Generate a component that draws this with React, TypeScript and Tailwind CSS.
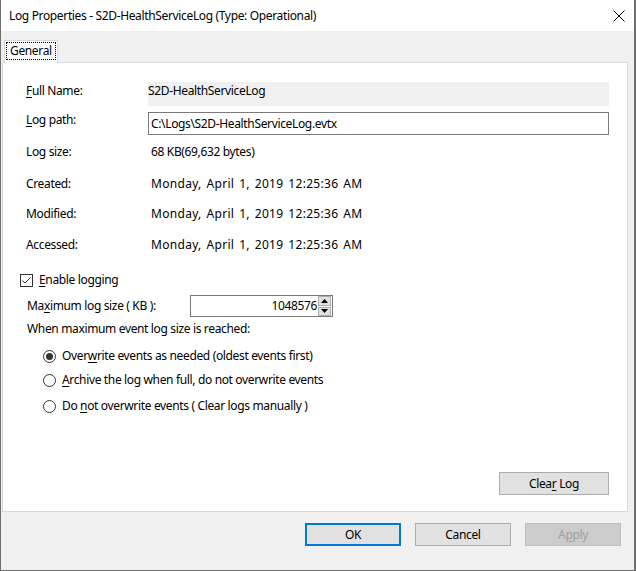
import React from "react";

const font = { fontFamily: "'Noto Sans', 'Liberation Sans', sans-serif" };

function U({ children }: { children: React.ReactNode }) {
  return <span className="underline underline-offset-2">{children}</span>;
}

function Radio({ checked, children, className }: { checked?: boolean; children: React.ReactNode; className: string }) {
  return (
    <div className={`flex items-center h-[16px] leading-[16px] ${className}`}>
      <div className="w-[13px] h-[13px] rounded-full border border-[#333333] bg-white flex items-center justify-center">
        {checked && <div className="w-[7px] h-[7px] rounded-full bg-[#333333]" />}
      </div>
      <div className="ml-[6px]">{children}</div>
    </div>
  );
}

function DateRow({ label, className }: { label: string; className: string }) {
  return (
    <div className={`flex h-[16px] leading-[16px] ${className}`}>
      <div className="w-[122px]">{label}</div>
      <div className="pl-[3px] tracking-[0.3px] [word-spacing:1.5px]">Monday, April 1, 2019 12:25:36 AM</div>
    </div>
  );
}

export default function App() {
  return (
    <div
      className="w-[636px] h-[571px] flex flex-col border-l border-r-2 border-b border-[#6f6f6f] bg-[#f0f0f0] text-[12px] tracking-[-0.35px] text-black"
      style={font}
    >
      {/* title bar */}
      <div className="h-[31px] bg-white flex items-center justify-between pl-[8px] pr-[8px]">
        <span className="leading-[16px]">Log Properties - S2D-HealthServiceLog (Type: Operational)</span>
        <svg width="12" height="12" viewBox="0 0 12 12" className="mr-[1px]">
          <path d="M0.5 0.5 L11.5 11.5 M11.5 0.5 L0.5 11.5" stroke="#000" strokeWidth="1" />
        </svg>
      </div>

      <div className="flex flex-col pl-[1px] pr-[6px] pt-[9px]">
        {/* tabs */}
        <div className="flex pl-[2px] h-[22px]">
          <div className="relative z-10 w-[54px] h-[23px] bg-white border border-b-0 border-[#d9d9d9] px-[1px] pt-[1px]">
            <div className="h-[18px] border border-dotted border-black flex items-center px-[3px] leading-[16px]">General</div>
          </div>
        </div>

        {/* panel */}
        <div className="h-[450px] bg-white border border-[#d9d9d9] flex flex-col pl-[23px] pr-[18px]">
          <div className="flex mt-[20px]">
            <div className="w-[122px] leading-[16px]">
              <U>F</U>ull Name:
            </div>
            <div className="flex-1 h-[24px] -mt-[1px] bg-[#f0f0f0] leading-[16px] pt-[1px]">S2D-HealthServiceLog</div>
          </div>
          <div className="flex mt-[6px]">
            <div className="w-[122px] leading-[16px]">
              <U>L</U>og path:
            </div>
            <div className="flex-1 h-[23px] border border-[#7a7a7a] flex items-center pl-[2px] leading-[16px]">
              C:\Logs\S2D-HealthServiceLog.evtx
            </div>
          </div>
          <div className="flex mt-[9px] h-[16px] leading-[16px]">
            <div className="w-[122px]">Log size:</div>
            <div className="pl-[3px]">68 KB(69,632 bytes)</div>
          </div>
          <DateRow label="Created:" className="mt-[16px]" />
          <DateRow label="Modified:" className="mt-[14px]" />
          <DateRow label="Accessed:" className="mt-[15px]" />

          {/* enable logging */}
          <div className="flex items-center mt-[19px] -ml-[6px] h-[16px] leading-[16px]">
            <div className="w-[13px] h-[13px] border border-[#333333] bg-white flex items-center justify-center">
              <svg width="11" height="11" viewBox="0 0 11 11">
                <path d="M1.5 5.5 L4 8 L9.5 2.5" fill="none" stroke="#333" strokeWidth="1" />
              </svg>
            </div>
            <div className="ml-[6px]">
              <U>E</U>nable logging
            </div>
          </div>

          <div className="flex items-center mt-[7px] h-[22px]">
            <div className="w-[164px] pl-[1px] leading-[16px]">
              Ma<U>x</U>imum log size ( KB ):
            </div>
            <div className="w-[143px] h-[22px] border border-[#7a7a7a] bg-white flex items-center">
              <div className="flex-1 text-right pr-[1px] leading-[16px]">1048576</div>
              <div className="w-[14px] h-[20px] flex flex-col gap-[1px] pr-[1px]">
                <div className="flex-1 bg-[#e1e1e1] border border-[#adadad] flex items-center justify-center">
                  <svg width="7" height="4" viewBox="0 0 7 4">
                    <path d="M3.5 0 L7 4 L0 4 Z" fill="#000" />
                  </svg>
                </div>
                <div className="flex-1 bg-[#e1e1e1] border border-[#adadad] flex items-center justify-center">
                  <svg width="7" height="4" viewBox="0 0 7 4">
                    <path d="M0 0 L7 0 L3.5 4 Z" fill="#000" />
                  </svg>
                </div>
              </div>
            </div>
          </div>

          <div className="mt-[4px] pl-[1px] h-[16px] leading-[16px]">When maximum event log size is reached:</div>

          <div className="pl-[17px] flex flex-col">
            <Radio checked className="mt-[11px]">
              Over<U>w</U>rite events as needed (oldest events first)
            </Radio>
            <Radio className="mt-[8px]">
              <U>A</U>rchive the log when full, do not overwrite events
            </Radio>
            <Radio className="mt-[10px]">
              Do <U>n</U>ot overwrite events ( Clear logs manually )
            </Radio>
          </div>

          <div className="flex justify-end mt-auto mb-[16px]">
            <button className="w-[110px] h-[23px] bg-[#e1e1e1] border border-[#adadad] leading-[16px]">
              Clea<U>r</U> Log
            </button>
          </div>
        </div>

        {/* dialog buttons */}
        <div className="flex justify-end gap-[14px] mt-[11px] pr-[7px]">
          <button className="w-[96px] h-[23px] bg-[#e1e1e1] border-2 border-[#0078d7] leading-[16px]">OK</button>
          <button className="w-[96px] h-[23px] bg-[#e1e1e1] border border-[#adadad] leading-[16px]">Cancel</button>
          <button className="w-[96px] h-[23px] bg-[#cccccc] border border-[#bfbfbf] text-[#a0a0a0] leading-[16px]">
            A<U>p</U>ply
          </button>
        </div>
      </div>
    </div>
  );
}
